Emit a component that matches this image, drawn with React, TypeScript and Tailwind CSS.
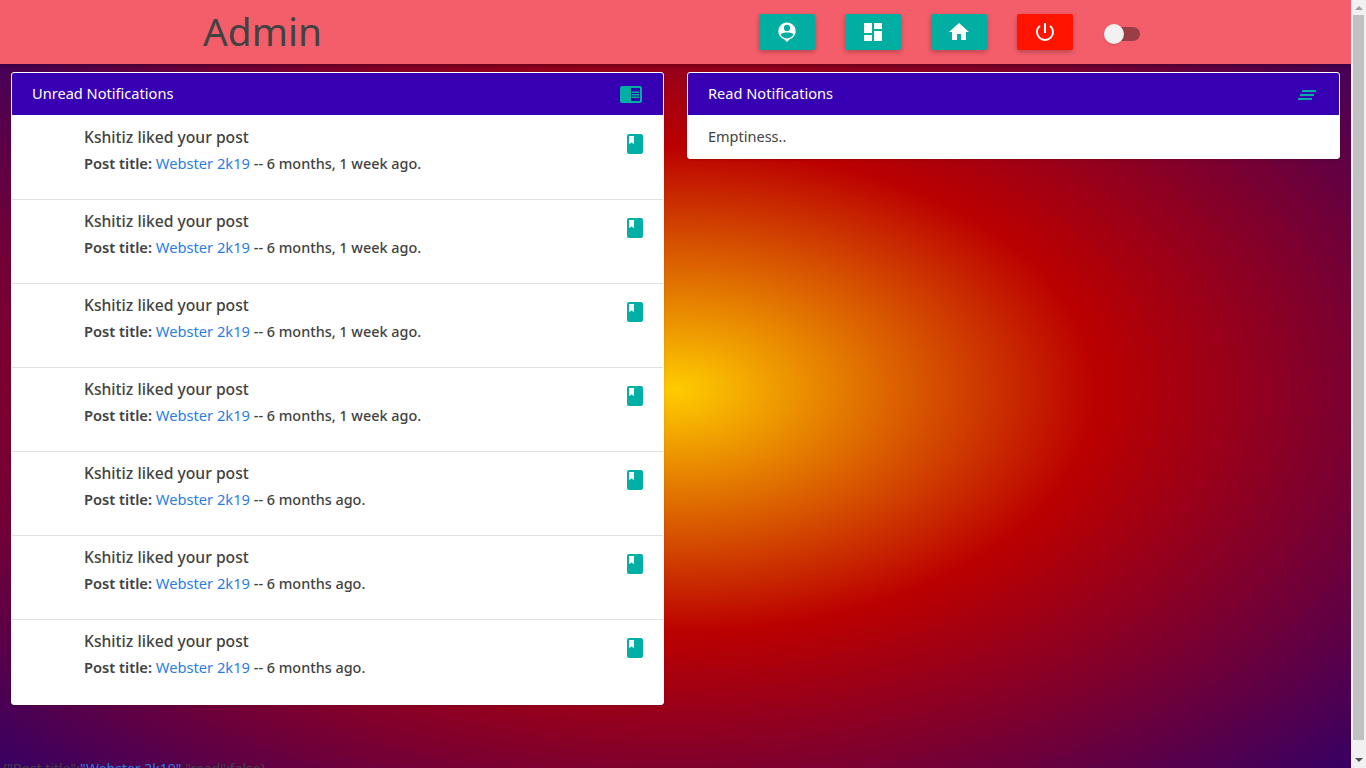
import { MdChromeReaderMode, MdBook, MdDashboard, MdHome, MdPowerSettingsNew } from "react-icons/md"

const notifications = [
  "6 months, 1 week ago.",
  "6 months, 1 week ago.",
  "6 months, 1 week ago.",
  "6 months, 1 week ago.",
  "6 months ago.",
  "6 months ago.",
  "6 months ago.",
]

function PinIcon() {
  return (
    <svg viewBox="0 0 24 24" className="w-[22px] h-[22px]" fill="currentColor">
      <path d="M12 1.500a9.500 9.500 0 0 0-3 18.500L12 23l3-3a9.500 9.500 0 0 0-3-18.500zm0 2.700a3.400 3.400 0 1 1 0 6.800 3.400 3.400 0 0 1 0-6.800zM5 14.500c1-1.500 4.500-2 7-2s6 .5 7 2c-1 3-4 4.500-7 4.500s-6-1.500-7-4.500z" fillRule="evenodd" />
    </svg>
  )
}

function LinesIcon() {
  return (
    <svg viewBox="0 0 18 10" className="w-[18px] h-[10px]" fill="#00b0a4">
      <rect x="4" y="0" width="14" height="2" />
      <rect x="2" y="4" width="14" height="2" />
      <rect x="0" y="8" width="14" height="2" />
    </svg>
  )
}

function NavButton({ children, danger }: { children: React.ReactNode; danger?: boolean }) {
  return (
    <button
      className={`w-14 h-9 rounded-[2px] flex items-center justify-center text-white shadow-[0_2px_5px_rgba(0,0,0,0.26)] ${
        danger ? "bg-[#ff1400]" : "bg-[#00afa1]"
      }`}
    >
      {children}
    </button>
  )
}

function CardHeader({ title, icon }: { title: string; icon: React.ReactNode }) {
  return (
    <div className="h-[42px] bg-[#3700b3] flex items-center justify-between px-5 text-white text-[14.6px]">
      <span>{title}</span>
      {icon}
    </div>
  )
}

export default function App() {
  return (
    <div className="h-screen overflow-hidden flex font-['Noto_Sans',sans-serif] text-[#424242]">
      <div className="flex-1 min-w-0 flex flex-col bg-[radial-gradient(ellipse_955px_551px_at_675px_390px,#ffcc00,#bb0000_44%,#330066)]">
        <header className="h-16 shrink-0 bg-[#f45e6a] flex items-center shadow-[0_2px_5px_rgba(0,0,0,0.3)]">
          <h1 className="ml-[203px] -mt-[2px] text-[38.800px] leading-none text-[#424242]">Admin</h1>
          <nav className="ml-[437px] flex items-center gap-[30px]">
            <NavButton>
              <PinIcon />
            </NavButton>
            <NavButton>
              <MdDashboard size={24} />
            </NavButton>
            <NavButton>
              <MdHome size={24} />
            </NavButton>
            <NavButton danger>
              <MdPowerSettingsNew size={24} />
            </NavButton>
            <div className="relative w-8 h-[14px] ml-[5px] mt-1 rounded-full bg-[#9a3d45]">
              <span className="absolute -left-1 -top-[3px] w-5 h-5 rounded-full bg-[#f1f1f1] shadow" />
            </div>
          </nav>
        </header>

        <main className="flex-1 min-h-0 pt-2 px-[11px]">
          <div className="flex items-start gap-[23px]">
            <section className="w-[653px] bg-white rounded-[3px] border border-white overflow-hidden shadow">
              <CardHeader title="Unread Notifications" icon={<MdChromeReaderMode size={24} className="text-[#00b0a4]" />} />
              {notifications.map((age, i) => (
                <div
                  key={i}
                  className={`flex justify-between pl-[72px] pr-[16px] ${
                    i === 0 ? "h-[85px] pt-[11px]" : "h-[84px] pt-[10px]"
                  } ${i < 6 ? "border-b border-[#e0e0e0]" : ""}`}
                >
                  <div>
                    <div className="text-[15.7px] leading-[22px] font-medium">Kshitiz liked your post</div>
                    <div className="mt-[5px] text-[14.4px] leading-[21px] font-medium">
                      <span className="font-semibold text-[14.7px]">Post title:</span>{" "}
                      <a className="text-[#2a7de1] font-normal text-[14.7px]">Webster 2k19</a> -- {age}
                    </div>
                  </div>
                  <MdBook size={24} className="text-[#00b0a4] mt-[6px]" />
                </div>
              ))}
            </section>
            <section className="w-[653px] bg-white rounded-[3px] border border-white overflow-hidden shadow">
              <CardHeader title="Read Notifications" icon={<span className="mr-[3px] mt-[2px]"><LinesIcon /></span>} />
              <div className="h-[43px] pl-5 flex items-center text-[14.5px]">Emptiness..</div>
            </section>
          </div>
          <p className="mt-[54px] -ml-[9px] text-[14px] leading-5 whitespace-nowrap">
            {'{"Post title":'}<span className="text-[#2a7de1]">"Webster 2k19"</span>{',"read":false}'}
          </p>
        </main>
      </div>
      <aside className="w-[15px] shrink-0 bg-[#f1f1f1] flex flex-col items-center pt-[6px] pb-[6px]">
        <span className="w-0 h-0 border-x-[4px] border-x-transparent border-b-[4px] border-b-[#a3a3a3]" />
        <span className="w-[11px] flex-1 mt-[5px] mb-[18px] bg-[#c1c1c1]" />
        <span className="w-0 h-0 border-x-[4px] border-x-transparent border-t-[4px] border-t-[#505050]" />
      </aside>
    </div>
  )
}
